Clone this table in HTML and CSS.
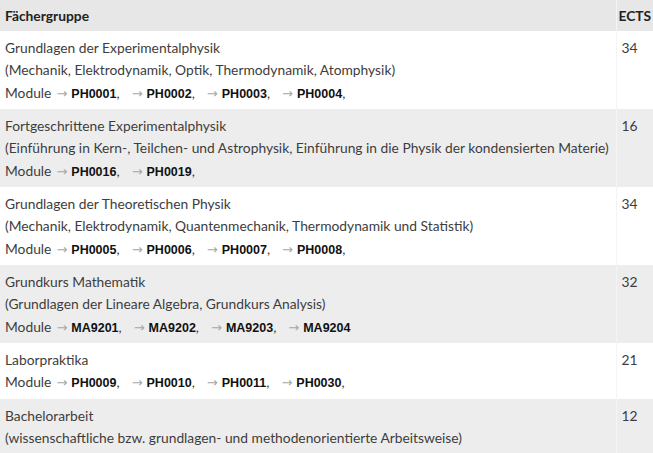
FILE: index.html
```html
<!DOCTYPE html>
<html lang="de">
<head>
    <meta charset="UTF-8">
    <title>Fächergruppen</title>
    <link rel="stylesheet" href="styles.css">
</head>
<body>
    <table class="plan">
        <thead>
            <tr>
                <th class="plan__group">Fächergruppe</th>
                <th class="plan__ects">ECTS</th>
            </tr>
        </thead>
        <tbody>
            <tr>
                <td>
                    <div>Grundlagen der Experimentalphysik</div>
                    <div>(Mechanik, Elektrodynamik, Optik, Thermodynamik, Atomphysik)</div>
                    <div>Module<span class="mod"><span class="arrow">→</span><b>PH0001</b></span>,<span class="mod"><span class="arrow">→</span><b>PH0002</b></span>,<span class="mod"><span class="arrow">→</span><b>PH0003</b></span>,<span class="mod"><span class="arrow">→</span><b>PH0004</b></span>,</div>
                </td>
                <td class="plan__ects">34</td>
            </tr>
            <tr>
                <td>
                    <div>Fortgeschrittene Experimentalphysik</div>
                    <div>(Einführung in Kern-, Teilchen- und Astrophysik, Einführung in die Physik der kondensierten Materie)</div>
                    <div>Module<span class="mod"><span class="arrow">→</span><b>PH0016</b></span>,<span class="mod"><span class="arrow">→</span><b>PH0019</b></span>,</div>
                </td>
                <td class="plan__ects">16</td>
            </tr>
            <tr>
                <td>
                    <div>Grundlagen der Theoretischen Physik</div>
                    <div>(Mechanik, Elektrodynamik, Quantenmechanik, Thermodynamik und Statistik)</div>
                    <div>Module<span class="mod"><span class="arrow">→</span><b>PH0005</b></span>,<span class="mod"><span class="arrow">→</span><b>PH0006</b></span>,<span class="mod"><span class="arrow">→</span><b>PH0007</b></span>,<span class="mod"><span class="arrow">→</span><b>PH0008</b></span>,</div>
                </td>
                <td class="plan__ects">34</td>
            </tr>
            <tr>
                <td>
                    <div>Grundkurs Mathematik</div>
                    <div>(Grundlagen der Lineare Algebra, Grundkurs Analysis)</div>
                    <div>Module<span class="mod"><span class="arrow">→</span><b>MA9201</b></span>,<span class="mod"><span class="arrow">→</span><b>MA9202</b></span>,<span class="mod"><span class="arrow">→</span><b>MA9203</b></span>,<span class="mod"><span class="arrow">→</span><b>MA9204</b></span></div>
                </td>
                <td class="plan__ects">32</td>
            </tr>
            <tr>
                <td>
                    <div>Laborpraktika</div>
                    <div>Module<span class="mod"><span class="arrow">→</span><b>PH0009</b></span>,<span class="mod"><span class="arrow">→</span><b>PH0010</b></span>,<span class="mod"><span class="arrow">→</span><b>PH0011</b></span>,<span class="mod"><span class="arrow">→</span><b>PH0030</b></span>,</div>
                </td>
                <td class="plan__ects">21</td>
            </tr>
            <tr>
                <td>
                    <div>Bachelorarbeit</div>
                    <div>(wissenschaftliche bzw. grundlagen- und methodenorientierte Arbeitsweise)</div>
                </td>
                <td class="plan__ects">12</td>
            </tr>
        </tbody>
    </table>
</body>
</html>
```

FILE: styles.css
```css
*{
    box-sizing: border-box;
    margin: 0;
    padding: 0;
}
body{
    background: #fff;
    overflow: hidden;
    font-family: Lato, "Open Sans", sans-serif;
    font-size: 13.8px;
    color: #3d3d3d;
}
.plan{
    width: 662px;
    border-collapse: collapse;
}
.plan th{
    text-align: left;
    font-weight: bold;
    color: #222;
    background: #e7e7e7;
    height: 31px;
    padding: 0 5px;
}
.plan th.plan__ects{
    padding-left: 2px;
}
.plan td{
    vertical-align: top;
    line-height: 22.33px;
    padding: 6px 5px 5px;
}
.plan tbody tr:nth-child(even){
    background: #ededed;
}
.plan__group{
    width: 616px;
}
.plan__ects{
    border-left: 1px solid #f4f4f4;
}
.plan td.plan__ects{
    padding-left: 5px;
}
.mod{
    margin-left: 12px;
}
.mod:first-child{
    margin-left: 5px;
}
.mod b{
    font-family: "Liberation Sans", Arial, sans-serif;
    font-size: 12.5px;
    line-height: 1;
    color: #111;
}
.arrow{
    display: inline-block;
    margin-right: 4px;
    font-family: "DejaVu Sans", sans-serif;
    font-size: 13px;
    line-height: 1;
    color: #a8a8a8;
}
```
